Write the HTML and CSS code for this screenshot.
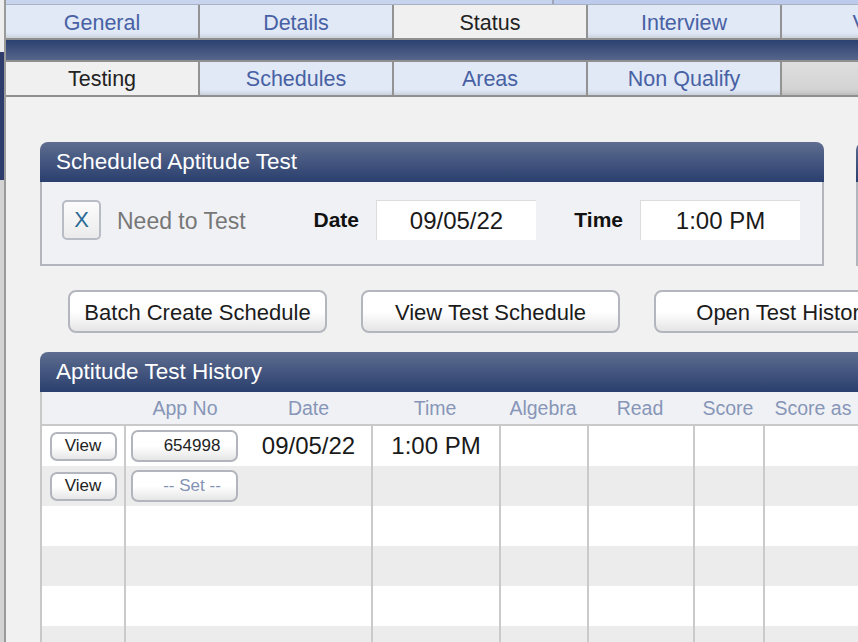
FILE: index.html
```html
<!DOCTYPE html>
<html lang="en">
<head>
    <meta charset="UTF-8">
    <meta name="viewport" content="width=device-width, initial-scale=1.0">
    <title>Aptitude Testing</title>
    <link rel="stylesheet" href="styles.css">
</head>
<body>
    <div class="edge"></div>
    <div class="main">
        <div class="top-strip"></div>
        <div class="tabs tabs-main">
            <div class="tab">General</div>
            <div class="tab">Details</div>
            <div class="tab active">Status</div>
            <div class="tab">Interview</div>
            <div class="tab">Visits</div>
        </div>
        <div class="navbar"></div>
        <div class="tabs tabs-sub">
            <div class="tab active">Testing</div>
            <div class="tab">Schedules</div>
            <div class="tab">Areas</div>
            <div class="tab">Non Qualify</div>
            <div class="tab blank"></div>
        </div>

        <div class="content">
            <div class="panel-row">
                <section class="panel sched">
                    <h2 class="panel-head">Scheduled Aptitude Test</h2>
                    <div class="panel-body sched-body">
                        <div class="check-group">
                            <div class="check">X</div>
                            <span class="check-label">Need to Test</span>
                        </div>
                        <label class="field-label date-label">Date</label>
                        <div class="field">09/05/22</div>
                        <label class="field-label time-label">Time</label>
                        <div class="field">1:00 PM</div>
                    </div>
                </section>
                <section class="panel next">
                    <h2 class="panel-head"></h2>
                    <div class="panel-body sched-body"></div>
                </section>
            </div>

            <div class="actions">
                <button class="btn">Batch Create Schedule</button>
                <button class="btn">View Test Schedule</button>
                <button class="btn">Open Test History</button>
            </div>

            <section class="panel history">
                <h2 class="panel-head">Aptitude Test History</h2>
                <div class="panel-body history-body">
                    <div class="grid-row thead">
                        <span></span>
                        <span>App No</span>
                        <span>Date</span>
                        <span>Time</span>
                        <span>Algebra</span>
                        <span>Read</span>
                        <span>Score</span>
                        <span>Score as</span>
                        <span></span>
                    </div>
                    <div class="grid-row trow">
                        <div><button class="mini">View</button></div>
                        <div><button class="appno">654998</button></div>
                        <div class="date">09/05/22</div>
                        <div>1:00 PM</div>
                        <div></div><div></div><div></div><div></div><div></div>
                    </div>
                    <div class="grid-row trow alt">
                        <div><button class="mini">View</button></div>
                        <div><button class="appno empty">-- Set --</button></div>
                        <div class="date"></div>
                        <div></div><div></div><div></div><div></div><div></div><div></div>
                    </div>
                    <div class="grid-row trow">
                        <div></div><div></div><div class="date"></div><div></div><div></div><div></div><div></div><div></div><div></div>
                    </div>
                    <div class="grid-row trow alt">
                        <div></div><div></div><div class="date"></div><div></div><div></div><div></div><div></div><div></div><div></div>
                    </div>
                    <div class="grid-row trow">
                        <div></div><div></div><div class="date"></div><div></div><div></div><div></div><div></div><div></div><div></div>
                    </div>
                    <div class="grid-row trow alt">
                        <div></div><div></div><div class="date"></div><div></div><div></div><div></div><div></div><div></div><div></div>
                    </div>
                </div>
            </section>
        </div>
    </div>
</body>
</html>
```

FILE: styles.css
```css
* {
    box-sizing: border-box;
}
html, body {
    margin: 0;
}
body {
    display: flex;
    width: 858px;
    height: 642px;
    overflow: hidden;
    font-family: "Liberation Sans", Arial, sans-serif;
    background: #f1f1f1;
}
.edge {
    width: 4px;
    flex: none;
    background: linear-gradient(to bottom, #eeeeee 0 52px, #2d3c6a 52px 180px, #d3d3d3 180px);
}
.main {
    flex: 1;
    min-width: 0;
    border-left: 2px solid #9a9a9a;
    display: flex;
    flex-direction: column;
    overflow: hidden;
    background: #f1f1f1;
}
.top-strip {
    height: 5px;
    flex: none;
    border-bottom: 1px solid #a9b1c4;
    background: linear-gradient(to right, #c8d3ee 546px, #9ea6b8 546px 548px, #bccaeb 548px);
}

/* tab rows */
.tabs {
    display: flex;
    flex: none;
}
.tabs-main {
    height: 35px;
    border-bottom: 2px solid #8f8f8f;
}
.tabs-sub {
    height: 37px;
    border-top: 2px solid #8f8f8f;
    border-bottom: 2px solid #8f8f8f;
}
.tab {
    width: 194px;
    flex: none;
    display: flex;
    align-items: center;
    justify-content: center;
    padding-top: 3px;
    border-right: 2px solid #939393;
    background: #e1e9f6;
    color: #4861a4;
    font-size: 21.5px;
    box-shadow: inset 0 -5px 4px -3px rgba(0, 0, 0, 0.12);
}
.tabs-sub .tab {
    padding-top: 2px;
}
.tab.active {
    background: #f0f0f0;
    color: #222;
    box-shadow: none;
}
.tab.blank {
    flex: 1;
    border-right: 0;
    background: linear-gradient(#dedede, #d1d1d1);
}
.navbar {
    height: 20px;
    flex: none;
    background: linear-gradient(#2c4171, #56658a);
}

.content {
    padding: 45px 0 0 34px;
}

/* panels */
.panel-row {
    display: flex;
    gap: 32px;
}
.panel {
    flex: none;
}
.sched {
    width: 784px;
}
.next {
    width: 300px;
}
.panel-head {
    margin: 0;
    height: 40px;
    padding-left: 16px;
    display: flex;
    align-items: center;
    border-radius: 8px 8px 0 0;
    background: linear-gradient(#5e6d90, #2a3f6e);
    color: #fff;
    font-size: 22.5px;
    font-weight: normal;
}
.panel-body {
    background: #f0f1f5;
    border: 2px solid #b3b5bc;
    border-top: 0;
}
.sched-body {
    height: 84px;
    padding: 18px 0 0 20px;
    display: flex;
    align-items: flex-start;
}
.check-group {
    width: 251px;
    height: 40px;
    display: flex;
    align-items: center;
    gap: 16px;
}
.check {
    width: 39px;
    height: 40px;
    display: flex;
    align-items: center;
    justify-content: center;
    border: 2px solid #b8bcc4;
    border-radius: 5px;
    background: linear-gradient(#fcfcfc, #ebebeb);
    color: #2a6a95;
    font-size: 22px;
}
.check-label {
    padding-top: 2px;
    color: #777;
    font-size: 23px;
}
.field-label {
    height: 40px;
    line-height: 40px;
    padding-right: 17px;
    text-align: right;
    font-size: 21px;
    font-weight: bold;
    color: #111;
}
.date-label {
    width: 63px;
}
.time-label {
    width: 104px;
}
.field {
    width: 160px;
    height: 40px;
    line-height: 40px;
    text-align: center;
    background: #fff;
    border-top: 1px solid #dcdcdc;
    border-left: 1px solid #dcdcdc;
    font-size: 24px;
    color: #1a1a1a;
}

/* action buttons */
.actions {
    display: flex;
    gap: 34px;
    margin: 24px 0 0 28px;
}
.btn {
    width: 259px;
    height: 43px;
    flex: none;
    padding: 2px 0 0;
    border: 2px solid #b4b6bd;
    border-radius: 8px;
    background: linear-gradient(#fff 50%, #e5e5e5);
    font-family: inherit;
    font-size: 22px;
    color: #1b1b1b;
}

/* history table */
.history {
    width: 900px;
    margin-top: 19px;
}
.history-body {
    border: 0;
    border-left: 2px solid #c8c8c8;
    background: #fff;
}
.grid-row {
    display: grid;
    grid-template-columns: 82px 122px 125px 128px 88px 106px 70px 100px 1fr;
}
.thead {
    height: 34px;
    border-bottom: 2px solid #c9c9c9;
    background: #f0f1f5;
    color: #8796b8;
    font-size: 19.5px;
}
.thead span {
    display: flex;
    align-items: center;
    justify-content: center;
}
.trow {
    height: 40px;
    background: #fff;
    font-size: 24px;
    color: #1a1a1a;
}
.trow.alt {
    background: #ececec;
}
.trow > div {
    display: flex;
    align-items: center;
    justify-content: center;
    border-left: 2px solid #cacaca;
}
.trow > div:first-child,
.trow > .date {
    border-left: 0;
}
.mini,
.appno {
    border: 2px solid #b2b5bb;
    border-radius: 7px;
    background: linear-gradient(#fff 50%, #e6e6e6);
    font-family: inherit;
    font-size: 17px;
    color: #222;
    padding: 0;
}
.mini {
    width: 67px;
    height: 29px;
}
.appno {
    width: 107px;
    height: 32px;
    margin-right: 4px;
    padding-left: 16px;
}
.appno.empty {
    color: #8393b5;
}
```
